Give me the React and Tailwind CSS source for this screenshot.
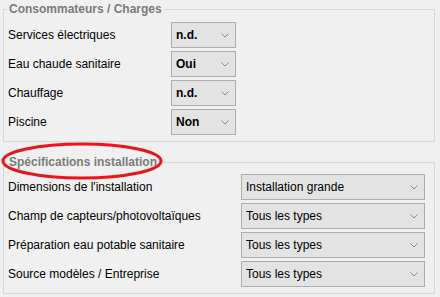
import React from 'react';

const consumers = [
  { label: 'Services électriques', value: 'n.d.' },
  { label: 'Eau chaude sanitaire', value: 'Oui' },
  { label: 'Chauffage', value: 'n.d.' },
  { label: 'Piscine', value: 'Non' },
];

const specs = [
  { label: "Dimensions de l'installation", value: 'Installation grande' },
  { label: 'Champ de capteurs/photovoltaïques', value: 'Tous les types' },
  { label: 'Préparation eau potable sanitaire', value: 'Tous les types' },
  { label: 'Source modèles / Entreprise', value: 'Tous les types' },
];

const Chevron = () => (
  <svg width="8" height="5" viewBox="0 0 8 5" className="shrink-0">
    <polyline points="0.5,0.5 4,4 7.5,0.5" fill="none" stroke="#8a8a8a" strokeWidth="1" />
  </svg>
);

const Combo = ({ value, bold, wide }) => (
  <div
    className={`flex items-center justify-between h-[26px] border border-[#adadad] bg-[#e3e3e3] pl-[4px] pr-[6px] text-[12px] text-black ${
      wide ? 'w-[184px]' : 'w-[65px]'
    } ${bold ? 'font-bold' : ''}`}
  >
    <span>{value}</span>
    <Chevron />
  </div>
);

const Group = ({ title, rows, wide, bold, className }) => (
  <fieldset className={`border border-[#d9d9d9] p-0 ${className}`}>
    <legend className="ml-[3px] px-[2px] text-[12px] leading-[15px] font-bold text-[#7b7b7b]">{title}</legend>
    <div className="flex flex-col gap-[3px] pt-[4px] pb-[6px]">
      {rows.map((r) => (
        <div key={r.label} className="flex items-center">
          <span className={`pl-[4px] text-[12px] text-black ${wide ? 'w-[237px]' : 'w-[167px]'}`}>{r.label}</span>
          <Combo value={r.value} bold={bold} wide={wide} />
        </div>
      ))}
    </div>
  </fieldset>
);

export default function App() {
  return (
    <div className="relative w-[440px] h-[297px] overflow-hidden bg-[#f0f0f0] pt-[2px] pl-[3px] font-['Liberation_Sans',Arial,sans-serif]">
      <Group title="Consommateurs / Charges" rows={consumers} bold className="w-[432px] pt-[1px]" />
      <Group title="Spécifications installation" rows={specs} wide className="w-[432px] mt-[13px]" />
      <svg className="absolute left-0 top-0 pointer-events-none" width="440" height="297">
        <ellipse cx="82" cy="161" rx="79" ry="17" fill="none" stroke="#e8161b" strokeWidth="3" />
      </svg>
    </div>
  );
}
